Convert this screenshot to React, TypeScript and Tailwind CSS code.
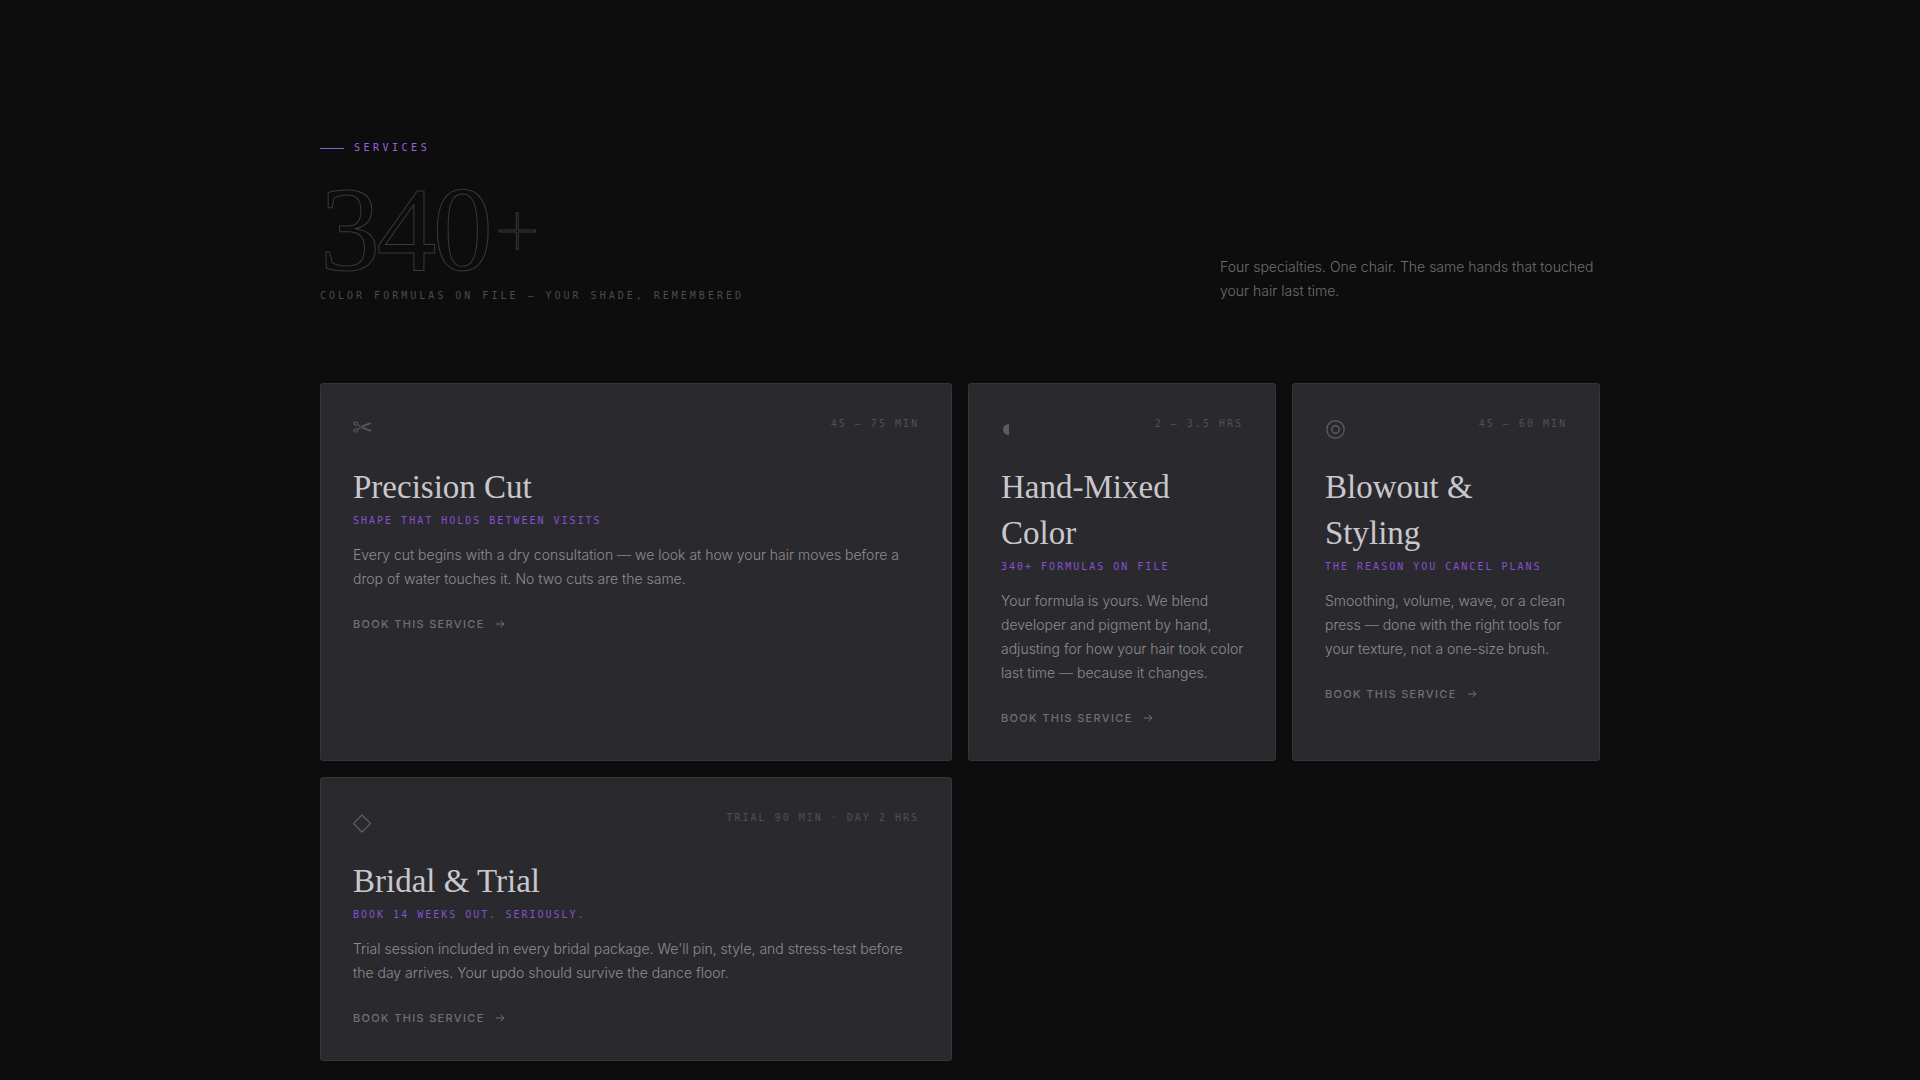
import type { ReactNode } from "react";

type Service = {
  title: string;
  tagline: string;
  duration: string;
  body: string;
  icon: ReactNode;
  wide?: boolean;
};

const iconClass = "size-7 -ml-px shrink-0 text-[#5a5a5f]";

const ScissorsIcon = () => (
  <svg viewBox="0 0 28 28" className={iconClass} fill="none" stroke="currentColor" aria-hidden="true">
    <ellipse cx="3.8" cy="7.6" rx="2" ry="1.5" strokeWidth="1.1" transform="rotate(20 3.8 7.6)" />
    <ellipse cx="3.8" cy="14.4" rx="2" ry="1.5" strokeWidth="1.1" transform="rotate(-20 3.8 14.4)" />
    <path d="M5.5 8.5 L10 10.4 L19.5 14.6 L18 15.4 L9 12 Z M5.5 13.5 L10 11.6 L19.5 7.4 L18 6.6 L9 10 Z" fill="currentColor" strokeWidth="0.2" />
  </svg>
);

const HalfDiscIcon = () => (
  <svg viewBox="0 0 28 28" className={iconClass} fill="currentColor" aria-hidden="true">
    <path d="M9 8 A6 5.5 0 0 0 9 19 Z" />
  </svg>
);

const RingsIcon = () => (
  <svg viewBox="0 0 28 28" className={iconClass} fill="none" stroke="currentColor" aria-hidden="true">
    <circle cx="11.5" cy="13.5" r="8.7" strokeWidth="1.4" />
    <circle cx="11.5" cy="13.5" r="3.7" strokeWidth="1.5" />
  </svg>
);

const DiamondIcon = () => (
  <svg viewBox="0 0 28 28" className={iconClass} fill="none" stroke="currentColor" aria-hidden="true">
    <path d="M10 5 L18.5 13.5 L10 22 L1.5 13.5 Z" strokeWidth="1.3" />
  </svg>
);

const ArrowIcon = () => (
  <svg viewBox="0 0 10 10" className="size-[10px]" fill="none" stroke="currentColor" aria-hidden="true">
    <path d="M1 5 H9 M5.8 2 L9 5 L5.8 8" strokeWidth="1" />
  </svg>
);

const services: Service[] = [
  {
    title: "Precision Cut",
    tagline: "Shape that holds between visits",
    duration: "45 – 75 min",
    body: "Every cut begins with a dry consultation — we look at how your hair moves before a drop of water touches it. No two cuts are the same.",
    icon: <ScissorsIcon />,
    wide: true,
  },
  {
    title: "Hand-Mixed Color",
    tagline: "340+ formulas on file",
    duration: "2 – 3.5 hrs",
    body: "Your formula is yours. We blend developer and pigment by hand, adjusting for how your hair took color last time — because it changes.",
    icon: <HalfDiscIcon />,
  },
  {
    title: "Blowout & Styling",
    tagline: "The reason you cancel plans",
    duration: "45 – 60 min",
    body: "Smoothing, volume, wave, or a clean press — done with the right tools for your texture, not a one-size brush.",
    icon: <RingsIcon />,
  },
  {
    title: "Bridal & Trial",
    tagline: "Book 14 weeks out. Seriously.",
    duration: "Trial 90 min · Day 2 hrs",
    body: "Trial session included in every bridal package. We'll pin, style, and stress-test before the day arrives. Your updo should survive the dance floor.",
    icon: <DiamondIcon />,
    wide: true,
  },
];

function ServiceCard({ service }: { service: Service }) {
  return (
    <article
      className={`rounded-[3px] border border-[#353538] bg-[#2a2a2e] p-8 ${service.wide ? "col-span-2" : "col-span-1"}`}
    >
      <div className="mb-5 flex items-start justify-between">
        {service.icon}
        <span className="font-['DejaVu_Sans_Mono',monospace] text-[10px] leading-4 tracking-[0.2em] text-[#505055] uppercase">
          {service.duration}
        </span>
      </div>
      <h3 className="font-['Liberation_Serif',serif] text-[33px] leading-[46px] text-[#c9c7cd]">{service.title}</h3>
      <p className="mt-px mb-3 font-['DejaVu_Sans_Mono',monospace] text-[10px] leading-5 tracking-[0.2em] whitespace-nowrap text-[#8650d0] uppercase">
        {service.tagline}
      </p>
      <p className="-mr-1 font-['Inter',sans-serif] text-[14px] leading-6 font-light text-[#8c8c90]">{service.body}</p>
      <a
        href="#book"
        className="mt-[23px] flex items-center gap-[10px] font-['Inter',sans-serif] text-[11px] leading-5 font-medium tracking-[0.12em] text-[#707074] uppercase"
      >
        Book this service
        <ArrowIcon />
      </a>
    </article>
  );
}

export default function App() {
  return (
    <main className="min-h-screen bg-[#0d0d0d] px-8 pt-[138px] pb-[18px]">
      <section className="mx-auto max-w-[1280px]">
        <header className="mb-[79px] flex items-end justify-between">
          <div>
            <h2 className="flex items-center gap-[10px] font-['DejaVu_Sans_Mono',monospace] text-[10px] leading-5 tracking-[0.35em] text-[#9b63e0] uppercase">
              <span className="h-px w-6 bg-[#8b5cd0]" />
              Services
            </h2>
            <p className="mt-[17px] font-['Liberation_Serif',serif] text-[120px] leading-[110px] tracking-[-0.03em] text-transparent [-webkit-text-stroke:1px_#3a3a3a]">
              340
              <span className="align-[14px] font-['Inter',sans-serif] text-[88px] leading-none font-thin">+</span>
            </p>
            <p className="mt-[3px] font-['DejaVu_Sans_Mono',monospace] text-[10px] leading-4 tracking-[0.3em] text-[#4c4c4c] uppercase">
              Color formulas on file — your shade, remembered
            </p>
          </div>
          <p className="mb-px w-[380px] font-['Inter',sans-serif] text-[14px] leading-6 font-light text-[#6e6e6e]">
            Four specialties. One chair. The same hands that touched your hair last time.
          </p>
        </header>
        <div className="grid grid-cols-4 gap-4">
          {services.map((service) => (
            <ServiceCard key={service.title} service={service} />
          ))}
        </div>
      </section>
    </main>
  );
}
